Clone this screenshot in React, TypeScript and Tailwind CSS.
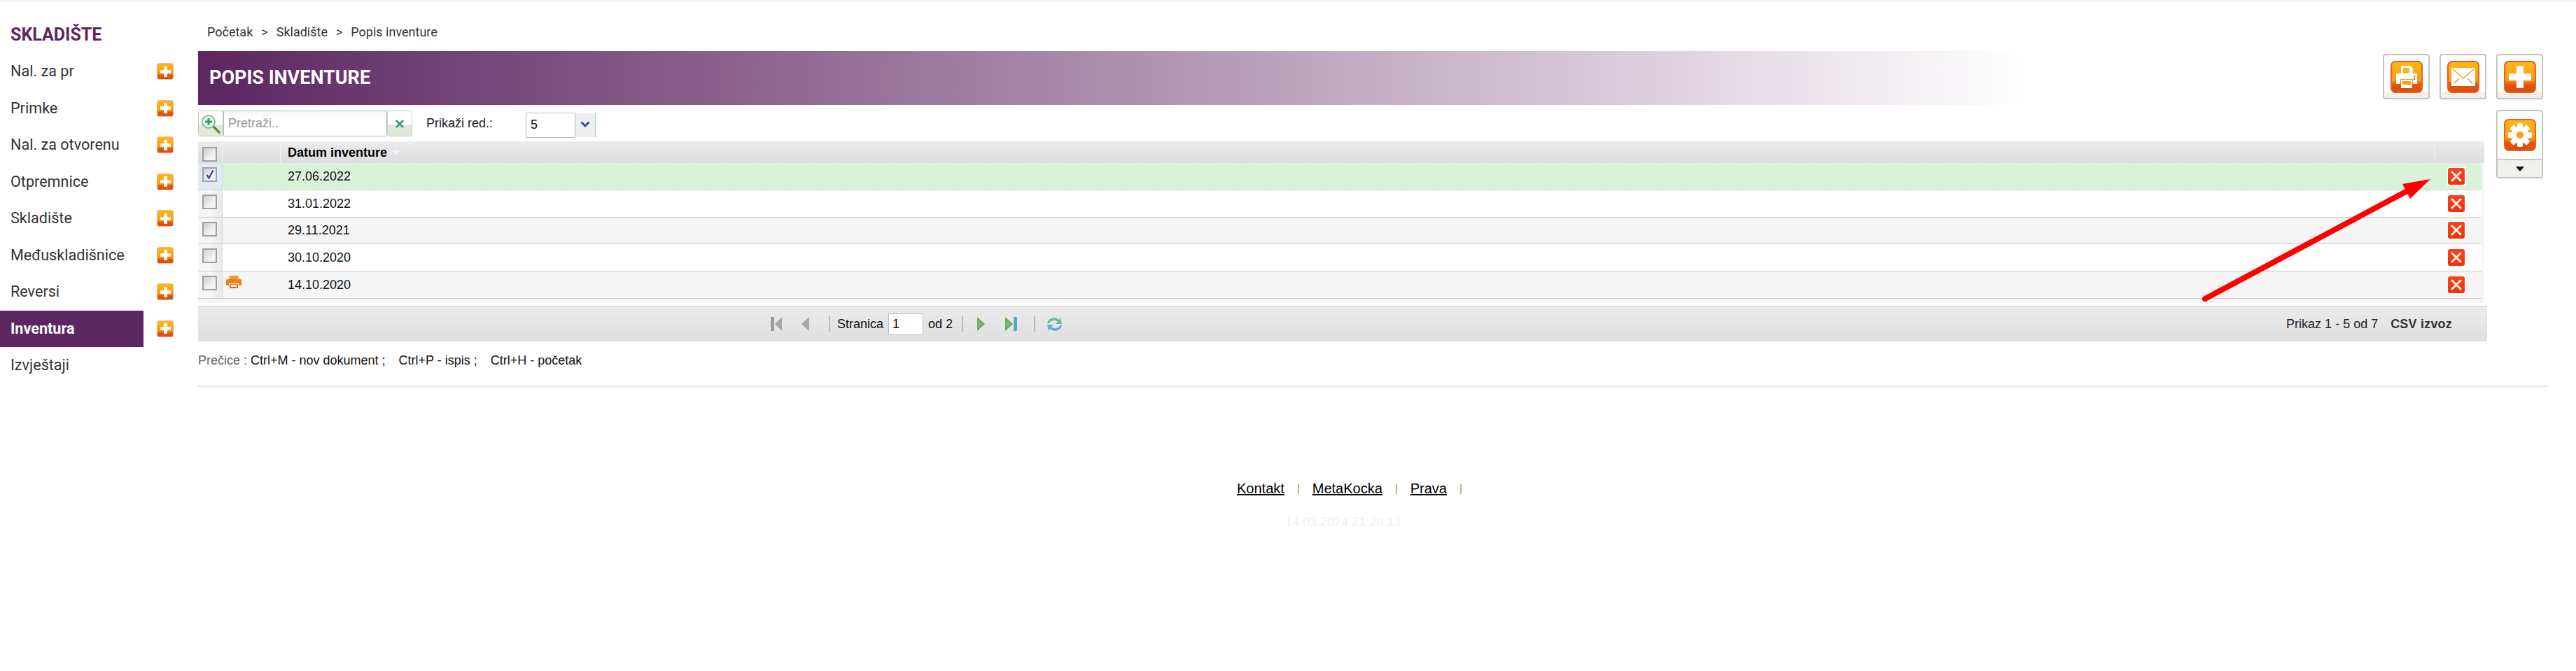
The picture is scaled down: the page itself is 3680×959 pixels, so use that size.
import React from "react";

const SANS = "font-['Liberation_Sans',Arial,sans-serif]";
const ROBOTO = "font-['Roboto',sans-serif]";

const menu = [
  "Nal. za pr",
  "Primke",
  "Nal. za otvorenu",
  "Otpremnice",
  "Skladište",
  "Međuskladišnice",
  "Reversi",
  "Inventura",
  "Izvještaji",
];

const rows = [
  { date: "27.06.2022", selected: true, tint: false, print: false },
  { date: "31.01.2022", selected: false, tint: false, print: false },
  { date: "29.11.2021", selected: false, tint: true, print: false },
  { date: "30.10.2020", selected: false, tint: false, print: false },
  { date: "14.10.2020", selected: false, tint: true, print: true },
];

// orange glossy square used by all action icons
const OrangeBox: React.FC<{ className: string; children: React.ReactNode }> = ({ className, children }) => (
  <div
    className={`flex items-center justify-center border border-[#e2632a] bg-[linear-gradient(#ffb716_0%,#f99b10_62%,#e2560c_76%,#dd4d0c_100%)] ${className}`}
  >
    {children}
  </div>
);

const PlusGlyph: React.FC<{ size: number }> = ({ size }) => (
  <svg width={size} height={size} viewBox="0 0 32 32">
    <path d="M11 0h10v11h11v10H21v11H11V21H0V11h11z" fill="#fff" />
  </svg>
);

const ActionButton: React.FC<{ children: React.ReactNode }> = ({ children }) => (
  <div className="flex h-[65px] w-[67px] items-center justify-center rounded-[4px] border-2 border-[#c4c4c4] bg-[linear-gradient(#fff_0%,#fff_85%,#eef1e8_86%,#eef1e8_100%)]">
    <OrangeBox className="h-[46px] w-[46px] rounded-[7px] border-2">{children}</OrangeBox>
  </div>
);

const Checkbox: React.FC<{ checked?: boolean }> = ({ checked }) => (
  <div className="relative h-[21px] w-[21px] border-2 border-[#a0a0a0] bg-[linear-gradient(135deg,#cfcfcf,#f4f4f4_70%)]">
    {checked && (
      <svg className="absolute left-[2px] top-[1px]" width="14" height="15" viewBox="0 0 14 15">
        <path d="M2.5 8l3 4.5L11.5 1.5" fill="none" stroke="#3f4f9a" strokeWidth="2.4" />
      </svg>
    )}
  </div>
);

const DeleteIcon: React.FC<{ halo: boolean }> = ({ halo }) => (
  <div className={`flex h-[26px] w-[27px] items-center justify-center ${halo ? "bg-white" : ""}`}>
    <div className="flex h-[24px] w-[24px] items-center justify-center rounded-[3px] bg-[linear-gradient(#f8431f,#e9350f)]">
      <svg width="16" height="16" viewBox="0 0 16 16">
        <path d="M2 2l12 12M14 2L2 14" stroke="#fde7d8" strokeWidth="3" strokeLinecap="round" />
      </svg>
    </div>
  </div>
);

const PagerSep = () => <div className="h-[22px] w-[2px] bg-[#bdb8ac]" />;

const GearGlyph = () => (
  <svg width="36" height="36" viewBox="0 0 36 36">
    {[0, 45, 90, 135, 180, 225, 270, 315].map((deg) => (
      <rect key={deg} x="14" y="1" width="8" height="10" rx="2" fill="#fff" transform={`rotate(${deg} 18 18)`} />
    ))}
    <circle cx="18" cy="18" r="12" fill="#fff" />
    <circle cx="18" cy="18" r="5" fill="#f9a010" />
  </svg>
);

export default function App() {
  return (
    <div className={`relative min-h-[959px] w-[3680px] overflow-hidden bg-white ${SANS}`}>
      <div className="h-[3px] bg-[#f4f4f4]" />
      <div className="flex">
        {/* sidebar */}
        <aside className={`w-[283px] shrink-0 ${ROBOTO}`}>
          <h1 className="mt-[33px] h-[28px] pl-[15px] text-[25px] font-bold leading-[28px] text-[#5c2660]">SKLADIŠTE</h1>
          <div className="mt-[12px]">
            {menu.map((item) => {
              const active = item === "Inventura";
              return (
                <div key={item} className="flex h-[52.5px] items-center">
                  <div
                    className={`flex h-full w-[205px] items-center pl-[15px] text-[21.6px] ${
                      active ? "bg-[#5c2660] font-bold text-white" : "text-[#333]"
                    }`}
                  >
                    {item}
                  </div>
                  {item !== "Izvještaji" && (
                    <OrangeBox className="ml-[19px] h-[24px] w-[24px] rounded-[3px] border-[#f0b9a0]">
                      <PlusGlyph size={15} />
                    </OrangeBox>
                  )}
                </div>
              );
            })}
          </div>
        </aside>

        {/* main */}
        <main className="w-[3358px]">
          <div className={`mt-[32px] flex h-[22px] items-center pl-[13px] text-[18px] leading-[22px] text-[#333] ${ROBOTO}`}>
            <span>Početak</span>
            <span className="mx-[12px] text-[18px]">&gt;</span>
            <span>Skladište</span>
            <span className="mx-[12px] text-[18px]">&gt;</span>
            <span>Popis inventure</span>
          </div>

          <div className="relative mt-[16px] flex h-[77px]">
            <div className="flex h-[77px] w-[2610px] items-center bg-gradient-to-r from-[#5c2660] to-white pl-[16px]">
              <h2 className={`text-[27px] font-bold text-white ${ROBOTO}`}>POPIS INVENTURE</h2>
            </div>
            <div className="ml-[511px] mt-[4px] flex gap-[14px]">
              <ActionButton>
                <svg width="36" height="36" viewBox="0 0 36 36">
                  <path d="M10 2h13l4 4v8H10z" fill="#fff" />
                  <path d="M13 5h9v8h-9z" fill="#fdb316" />
                  <path d="M3 13h30v15h-6v-7H9v7H3z" fill="#fff" />
                  <path d="M10 22h16v12H10z" fill="#fff" />
                  <path d="M12 24h12v5H12z" fill="#f9a010" />
                  <circle cx="29" cy="17" r="1.2" fill="#e2560c" />
                  <circle cx="29" cy="21" r="1.2" fill="#e2560c" />
                </svg>
              </ActionButton>
              <ActionButton>
                <svg width="36" height="30" viewBox="0 0 36 30">
                  <path d="M1 2h34v26H1z" fill="#fff" />
                  <path d="M2 3l16 14L34 3" fill="none" stroke="#f79a3a" strokeWidth="1.6" />
                  <path d="M5 24l7-7M31 24l-7-7" stroke="#f79a3a" strokeWidth="1.6" />
                </svg>
              </ActionButton>
              <ActionButton>
                <PlusGlyph size={32} />
              </ActionButton>
            </div>
          </div>

          <div className="flex">
            <div className="w-[3270px]">
              {/* search toolbar */}
              <div className="mt-[8px] flex h-[37px] items-center">
                <div className="flex h-[37px] w-[36px] items-center justify-center rounded-[4px] border border-[#c8c8c8] bg-[linear-gradient(#fff_55%,#e2e9da_56%)]">
                  <svg width="28" height="28" viewBox="0 0 28 28">
                    <path d="M17 17l9 9" stroke="#5d8a4d" strokeWidth="3.5" strokeLinecap="round" />
                    <circle cx="11" cy="11" r="9" fill="#eaf7f1" stroke="#8fb5a3" strokeWidth="2" />
                    <path d="M11 6v10M6 11h10" stroke="#21a866" strokeWidth="3" />
                  </svg>
                </div>
                <div className="flex h-[37px] w-[234px] items-center border border-[#b4bccd] bg-[linear-gradient(#f4f8f8,#fff_30%)] pl-[6px] text-[18px] text-[#999]">
                  Pretraži..
                </div>
                <div className="flex h-[37px] w-[36px] items-center justify-center rounded-[4px] border border-[#c8c8c8] bg-[linear-gradient(#fff_55%,#dfe8d8_56%)]">
                  <svg width="14" height="14" viewBox="0 0 14 14">
                    <path d="M2 2l10 10M12 2L2 12" stroke="#3f9a8a" strokeWidth="3" />
                  </svg>
                </div>
                <span className="ml-[20px] w-[142px] text-[18px] text-[#222]">Prikaži red.:</span>
                <div className="mt-[4px] flex h-[36px] w-[71px] items-center border border-[#b4bccd] pl-[6px] text-[18px] text-[#111]">
                  5
                </div>
                <div className="mt-[3px] flex h-[35px] w-[29px] items-center justify-center border-r border-[#9fd0a8] bg-[#eef0f0]">
                  <svg width="14" height="10" viewBox="0 0 14 10">
                    <path d="M1.5 1.5L7 7l5.5-5.5" fill="none" stroke="#2f4f8f" strokeWidth="3" />
                  </svg>
                </div>
              </div>

              {/* grid */}
              <div className="mt-[7px] w-[3266px] bg-[#f5f5f5] pb-[6px]">
                <div className="flex h-[31px] bg-[linear-gradient(#ececec_0%,#e8e8e9_25%,#dcdde0_100%)] text-[18px] font-bold text-black">
                  <div className="flex w-[35px] items-center border-r border-[#f3f3f3] pl-[6px] pt-[6px]">
                    <Checkbox />
                  </div>
                  <div className="w-[83px] border-r border-[#f3f3f3]" />
                  <div className="flex flex-1 items-center border-r border-[#f3f3f3] pl-[10px] pt-[1px]">
                    Datum inventure
                    <svg className="ml-[6px]" width="12" height="7" viewBox="0 0 12 7">
                      <path d="M0 0h12L6 7z" fill="#f3f3f5" />
                    </svg>
                  </div>
                  <div className="w-[71px]" />
                </div>
                {rows.map((row) => (
                  <div
                    key={row.date}
                    className={`mr-[4px] flex h-[38.8px] border-b text-[18px] text-[#111] ${
                      row.selected
                        ? "border-dotted border-[#b8c8b8] bg-[#d9f3d9]"
                        : row.tint
                          ? "border-[#cccccc] bg-[#f5f5f5]"
                          : "border-[#cccccc] bg-white"
                    }`}
                  >
                    <div
                      className={`w-[35px] border-r border-[#d8d8d8] pl-[6px] pt-[6px] ${
                        row.selected
                          ? "bg-[linear-gradient(90deg,#e4e9ee,#dce9fb)]"
                          : "bg-[linear-gradient(90deg,#f6f6f6_50%,#e8e8e8)]"
                      }`}
                    >
                      <Checkbox checked={row.selected} />
                    </div>
                    <div className="w-[83px] pl-[5px] pt-[6px]">
                      {row.print && (
                        <svg width="22" height="19" viewBox="0 0 22 19">
                          <path d="M5 0h12l1 6H4z" fill="#f29a2a" />
                          <path d="M0 7q0-2 2-2h18q2 0 2 2v7h-4v-3H4v3H0z" fill="#ee7f1c" />
                          <path d="M5 12h12v6H5z" fill="#ea6a1a" />
                          <path d="M7 13h8v3H7z" fill="#fff" />
                        </svg>
                      )}
                    </div>
                    <div className="flex flex-1 items-center pl-[10px] pt-[1px]">{row.date}</div>
                    <div className="flex w-[67px] items-center justify-center pr-[5px]">
                      <DeleteIcon halo={row.selected || row.tint} />
                    </div>
                  </div>
                ))}
              </div>

              {/* pager */}
              <div className="mt-[4px] border-t-2 border-[#dddddd]">
                <div className="flex h-[49px] items-center bg-[linear-gradient(#ebebeb,#dfdfdf)] text-[18px] text-[#111]">
                  <svg className="ml-[817px]" width="18" height="22" viewBox="0 0 18 22">
                    <path d="M1 1h5v20H1z" fill="#9c9c9c" />
                    <path d="M17 1v20L7 11z" fill="#a8a8a8" />
                  </svg>
                  <svg className="ml-[26px]" width="12" height="20" viewBox="0 0 12 20">
                    <path d="M12 0v20L1 10z" fill="#a8a8a8" />
                  </svg>
                  <div className="ml-[28px]">
                    <PagerSep />
                  </div>
                  <span className="ml-[10px]">Stranica</span>
                  <div className="ml-[7px] flex h-[31px] w-[50px] items-center border border-[#b4bccd] bg-white pl-[5px]">1</div>
                  <span className="ml-[7px]">od 2</span>
                  <div className="ml-[13px]">
                    <PagerSep />
                  </div>
                  <svg className="ml-[20px]" width="11" height="20" viewBox="0 0 11 20">
                    <path d="M0 0v20l11-10z" fill="#6aaf3f" />
                    <path d="M2 5v10l5-5z" fill="#6fb6d6" />
                  </svg>
                  <svg className="ml-[29px]" width="18" height="22" viewBox="0 0 18 22">
                    <path d="M0 1v20l11-10z" fill="#6aaf3f" />
                    <path d="M2 6v10l5-5z" fill="#6fb6d6" />
                    <path d="M12 1h5v20h-5z" fill="#52a9c4" />
                  </svg>
                  <div className="ml-[23px]">
                    <PagerSep />
                  </div>
                  <svg className="ml-[15px]" width="25" height="25" viewBox="0 0 25 25">
                    <path d="M2 11a10 9 0 0 1 17-5l2-3 2 9h-9l3-3a7 6 0 0 0-12 2z" fill="#6fb98f" />
                    <path d="M23 14a10 9 0 0 1-17 5l-2 3-2-9h9l-3 3a7 6 0 0 0 12-2z" fill="#5fb0cf" />
                  </svg>
                  <span className="ml-auto text-[#222]">Prikaz 1 - 5 od 7</span>
                  <span className="ml-[18px] mr-[50px] font-bold tracking-[0.2px] text-[#333]">CSV izvoz</span>
                </div>
              </div>
            </div>

            {/* settings */}
            <div className="ml-[13px] mt-[7px] h-[98px] w-[67px] rounded-[4px] border-2 border-[#c4c4c4] bg-white">
              <div className="flex h-[70px] items-center justify-center border-b-2 border-[#c8c8c8]">
                <OrangeBox className="h-[46px] w-[46px] rounded-[7px] border-2">
                  <GearGlyph />
                </OrangeBox>
              </div>
              <div className="flex h-[24px] items-center justify-center bg-[#eff2ea]">
                <svg width="12" height="7" viewBox="0 0 12 7">
                  <path d="M0 0h12L6 7z" fill="#111" />
                </svg>
              </div>
            </div>
          </div>

          <p className="mt-[15px] flex h-[24px] text-[18px] leading-[24px] text-[#111]">
            <span className="whitespace-pre text-[#666]">Prečice : </span>
            <span>Ctrl+M - nov dokument ;</span>
            <span className="ml-[19px]">Ctrl+P - ispis ;</span>
            <span className="ml-[19px]">Ctrl+H - početak</span>
          </p>
          <hr className="mt-[24px] border-t-2 border-[#e4e4e4]" />

          {/* footer */}
          <div className="ml-[1484px] mt-[133px] flex h-[24px] items-center gap-[18px] text-[20px] leading-[24px] text-black">
            <a className="underline">Kontakt</a>
            <span className="text-[15px] text-[#7f9a55]">|</span>
            <a className="underline">MetaKocka</a>
            <span className="text-[15px] text-[#7f9a55]">|</span>
            <a className="underline">Prava</a>
            <span className="text-[15px] text-[#7f9a55]">|</span>
          </div>
          <div className="ml-[1553px] mt-[24px] h-[24px] text-[18px] leading-[24px] text-[#f0f0f0]">14.03.2024 21:20:13</div>
        </main>
      </div>

      {/* red annotation arrow drawn over the grid */}
      <svg className="absolute left-[3140px] top-[250px]" width="340" height="185" viewBox="0 0 340 185">
        <path d="M10 177L310 17" stroke="#ff0000" strokeWidth="8" strokeLinecap="round" />
        <path d="M332 6L292 13L303 34z" fill="#ff0000" />
      </svg>
    </div>
  );
}
